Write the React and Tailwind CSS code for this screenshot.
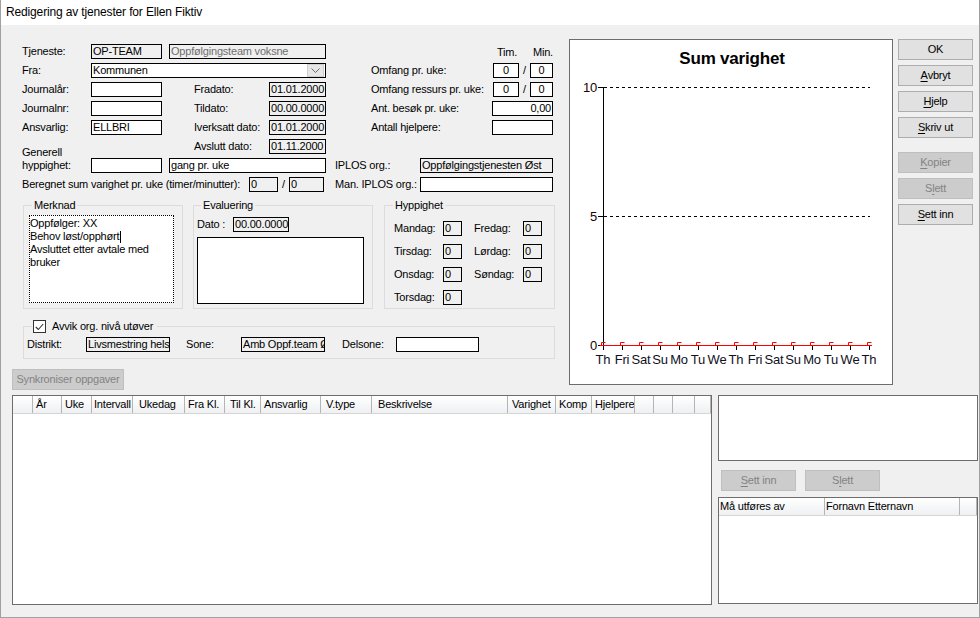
import React from "react";

function Field({ className = "", children }) {
  return (
    <div className={"h-[15px] shrink-0 overflow-hidden whitespace-nowrap border border-black px-[1px] leading-[13px] " + className}>
      {children}
    </div>
  );
}

function Btn({ children, disabled, className = "" }) {
  return (
    <div
      className={
        (disabled
          ? "border-[#bfbfbf] bg-[#cccccc] text-[#838383] "
          : "border-[#adadad] bg-[#e1e1e1] text-black ") +
        "flex h-[21px] shrink-0 items-center justify-center border " +
        className
      }
    >
      {children}
    </div>
  );
}

function U({ children }) {
  return <span className="underline underline-offset-[2px]">{children}</span>;
}

function Row({ left, mid }) {
  return (
    <div className="flex h-[19px] items-center">
      <div className="flex h-[19px] w-[304px] shrink-0 items-center">{left}</div>
      <div className="ml-[9px] flex h-[19px] w-[218px] shrink-0 items-center">{mid}</div>
    </div>
  );
}

function Group({ label, className = "", labelClass = "left-[8px]", children }) {
  return (
    <div className={"relative shrink-0 border border-[#dcdcdc] " + className}>
      <div className={"absolute -top-[7px] bg-[#f0f0f0] px-[2px] " + labelClass}>{label}</div>
      {children}
    </div>
  );
}

function LeftArea() {
  const gray = "bg-[#f0f0f0]";
  return (
    <div className="w-[568px] shrink-0 pt-[17px]">
      <div className="pl-[21px]">
        <Row
          left={
            <>
              <div className="w-[69px] shrink-0">Tjeneste:</div>
              <Field className="w-[71px] bg-[#f0f0f0]">OP-TEAM</Field>
              <Field className="ml-[7px] w-[157px] bg-[#f0f0f0] text-[#6d6d6d]">Oppfølgingsteam voksne</Field>
            </>
          }
          mid={
            <>
              <div className="ml-[162px] w-[36px] shrink-0 pt-[2px]">Tim.</div>
              <div className="pt-[2px]">Min.</div>
            </>
          }
        />
        <Row
          left={
            <>
              <div className="w-[69px] shrink-0">Fra:</div>
              <div className="flex h-[15px] w-[235px] shrink-0 items-center border border-black bg-white pl-[1px]">
                <div className="flex-1">Kommunen</div>
                <div className="mr-[1px] flex h-[13px] w-[17px] items-center justify-center border border-[#cfcfcf] bg-[#e6e6e6]">
                  <svg width="9" height="5" viewBox="0 0 9 5">
                    <path d="M0.5 0.5 L4.5 4.5 L8.5 0.5" fill="none" stroke="#6a6a6a" strokeWidth="1" />
                  </svg>
                </div>
              </div>
            </>
          }
          mid={
            <>
              <div className="ml-[36px] w-[122px] shrink-0">Omfang pr. uke:</div>
              <Field className="w-[26px] bg-white text-center">0</Field>
              <div className="w-[11px] shrink-0 text-center">/</div>
              <Field className="w-[23px] bg-white text-center">0</Field>
            </>
          }
        />
        <Row
          left={
            <>
              <div className="w-[69px] shrink-0">Journalår:</div>
              <Field className="w-[71px] bg-white"></Field>
              <div className="ml-[32px] w-[75px] shrink-0">Fradato:</div>
              <Field className={"w-[57px] " + gray}>01.01.2000</Field>
            </>
          }
          mid={
            <>
              <div className="ml-[36px] w-[122px] shrink-0">Omfang ressurs pr. uke:</div>
              <Field className="w-[26px] bg-white text-center">0</Field>
              <div className="w-[11px] shrink-0 text-center">/</div>
              <Field className="w-[23px] bg-white text-center">0</Field>
            </>
          }
        />
        <Row
          left={
            <>
              <div className="w-[69px] shrink-0">Journalnr:</div>
              <Field className="w-[71px] bg-white"></Field>
              <div className="ml-[32px] w-[75px] shrink-0">Tildato:</div>
              <Field className={"w-[57px] " + gray}>00.00.0000</Field>
            </>
          }
          mid={
            <>
              <div className="ml-[36px] w-[121px] shrink-0">Ant. besøk pr. uke:</div>
              <Field className="w-[61px] bg-white text-right">0,00</Field>
            </>
          }
        />
        <Row
          left={
            <>
              <div className="w-[69px] shrink-0">Ansvarlig:</div>
              <Field className="w-[71px] bg-white">ELLBRI</Field>
              <div className="ml-[32px] w-[75px] shrink-0">Iverksatt dato:</div>
              <Field className={"w-[57px] " + gray}>01.01.2000</Field>
            </>
          }
          mid={
            <>
              <div className="ml-[36px] w-[121px] shrink-0">Antall hjelpere:</div>
              <Field className="w-[61px] bg-white"></Field>
            </>
          }
        />
        <Row
          left={
            <>
              <div className="h-[19px] w-[172px] shrink-0 self-start pt-[9px]">Generell</div>
              <div className="w-[75px] shrink-0">Avslutt dato:</div>
              <Field className={"w-[57px] " + gray}>01.11.2000</Field>
            </>
          }
          mid={null}
        />
        <Row
          left={
            <>
              <div className="w-[69px] shrink-0">hyppighet:</div>
              <Field className="w-[71px] bg-white"></Field>
              <Field className="ml-[7px] w-[157px] bg-white">gang pr. uke</Field>
            </>
          }
          mid={
            <>
              <div className="w-[85px] shrink-0">IPLOS org.:</div>
              <Field className={"w-[133px] " + gray}>Oppfølgingstjenesten Øst</Field>
            </>
          }
        />
        <Row
          left={
            <>
              <div className="w-[227px] shrink-0">Beregnet sum varighet pr. uke (timer/minutter):</div>
              <Field className={"w-[29px] " + gray}>0</Field>
              <div className="w-[11px] shrink-0 text-center">/</div>
              <Field className={"w-[35px] " + gray}>0</Field>
            </>
          }
          mid={
            <>
              <div className="w-[85px] shrink-0">Man. IPLOS org.:</div>
              <Field className="w-[133px] bg-white"></Field>
            </>
          }
        />
      </div>

      <div className="mt-[11px] flex pl-[22px]">
        <Group label="Merknad" className="h-[104px] w-[160px]">
          <div className="ml-[5px] mt-[9px] h-[88px] w-[145px] border border-dotted border-black bg-white pt-[1px]">
            <div>Oppfølger: XX</div>
            <div className="flex items-center">
              Behov løst/opphørt<span className="ml-[1px] inline-block h-[12px] border-l border-black"></span>
            </div>
            <div>Avsluttet etter avtale med</div>
            <div>bruker</div>
          </div>
        </Group>
        <Group label="Evaluering" labelClass="left-[7px]" className="ml-[10px] h-[104px] w-[180px]">
          <div className="pl-[3px] pt-[11px]">
            <div className="flex h-[15px] items-center">
              <div className="w-[36px] shrink-0">Dato :</div>
              <Field className="w-[56px] bg-[#f0f0f0]">00.00.0000</Field>
            </div>
            <div className="mt-[5px] h-[67px] w-[167px] border border-black bg-white"></div>
          </div>
        </Group>
        <Group label="Hyppighet" className="ml-[11px] h-[104px] w-[171px]">
          <div className="flex flex-col gap-[8px] pl-[9px] pt-[15px]">
            {[
              ["Mandag:", "Fredag:"],
              ["Tirsdag:", "Lørdag:"],
              ["Onsdag:", "Søndag:"],
              ["Torsdag:", null],
            ].map(([a, b]) => (
              <div key={a} className="flex h-[15px] items-center">
                <div className="w-[49px] shrink-0">{a}</div>
                <Field className="w-[19px] bg-[#f0f0f0]">0</Field>
                {b && (
                  <>
                    <div className="ml-[12px] w-[49px] shrink-0">{b}</div>
                    <Field className="w-[19px] bg-[#f0f0f0]">0</Field>
                  </>
                )}
              </div>
            ))}
          </div>
        </Group>
      </div>

      <div className="relative ml-[22px] mt-[17px] h-[33px] w-[532px] border border-[#dcdcdc]">
        <div className="absolute -top-[7px] left-[8px] flex h-[13px] items-center bg-[#f0f0f0] pl-[1px] pr-[4px]">
          <div className="flex h-[13px] w-[13px] items-center justify-center border border-[#333333] bg-white">
            <svg width="9" height="8" viewBox="0 0 9 8">
              <path d="M0.8 4 L3.3 6.5 L8.2 1" fill="none" stroke="#333333" strokeWidth="1.1" />
            </svg>
          </div>
          <div className="ml-[6px]">Avvik org. nivå utøver</div>
        </div>
        <div className="mt-[10px] flex h-[15px] items-center pl-[3px]">
          <div className="w-[59px] shrink-0">Distrikt:</div>
          <Field className="w-[84px] bg-[#f0f0f0]">Livsmestring helse</Field>
          <div className="ml-[16px] w-[55px] shrink-0">Sone:</div>
          <Field className="w-[84px] bg-[#f0f0f0]">Amb Oppf.team Øst</Field>
          <div className="ml-[17px] w-[54px] shrink-0">Delsone:</div>
          <Field className="w-[83px] bg-white"></Field>
        </div>
      </div>

      <Btn disabled className="ml-[11px] mt-[10px] w-[112px]">Synkroniser oppgaver</Btn>
    </div>
  );
}

function Chart() {
  const days = ["Th", "Fri", "Sat", "Su", "Mo", "Tu", "We", "Th", "Fri", "Sat", "Su", "Mo", "Tu", "We", "Th"];
  const ff = "Liberation Sans, Arial, sans-serif";
  return (
    <div className="mt-[14px] h-[346px] w-[324px] shrink-0 border border-[#6d6d6d] bg-white">
      <svg width="322" height="344" viewBox="0 0 322 344">
        <text x="162" y="24" textAnchor="middle" fontSize="17" fontWeight="bold" fontFamily={ff} fill="#000">
          Sum varighet
        </text>
        <line x1="34" y1="47.5" x2="300" y2="47.5" stroke="#000" strokeDasharray="3 3" />
        <line x1="34" y1="176.5" x2="300" y2="176.5" stroke="#000" strokeDasharray="3 3" />
        <line x1="33.5" y1="47" x2="33.5" y2="306" stroke="#000" />
        <line x1="28" y1="47.5" x2="34" y2="47.5" stroke="#000" />
        <line x1="28" y1="176.5" x2="34" y2="176.5" stroke="#000" />
        <line x1="28" y1="305.5" x2="34" y2="305.5" stroke="#000" />
        <text x="27" y="52" textAnchor="end" fontSize="13" fontFamily={ff} fill="#200000">10</text>
        <text x="27" y="181" textAnchor="end" fontSize="13" fontFamily={ff} fill="#200000">5</text>
        <text x="27" y="310" textAnchor="end" fontSize="13" fontFamily={ff} fill="#200000">0</text>
        {days.map((d, k) => (
          <line key={"t" + k} x1={33.5 + 19 * k} y1="306" x2={33.5 + 19 * k} y2="310" stroke="#000" />
        ))}
        <line x1="30" y1="305.5" x2="302" y2="305.5" stroke="#ff0000" />
        {days.map((d, k) => (
          <path
            key={"r" + k}
            d={`M${31.5 + 19 * k} 305 V302.5 H${35.5 + 19 * k}`}
            fill="none"
            stroke="#ff0000"
          />
        ))}
        {days.map((d, k) => (
          <text key={"d" + k} x={33 + 19 * k} y="324" textAnchor="middle" fontSize="13" fontFamily={ff} fill="#10101e">
            {d}
          </text>
        ))}
      </svg>
    </div>
  );
}

function Buttons() {
  return (
    <div className="ml-[5px] mt-[14px] flex w-[75px] shrink-0 flex-col gap-[5px]">
      <Btn>OK</Btn>
      <Btn>
        <U>A</U>vbryt
      </Btn>
      <Btn>
        <U>H</U>jelp
      </Btn>
      <Btn>
        <U>S</U>kriv ut
      </Btn>
      <Btn disabled className="mt-[9px]">
        <U>K</U>opier
      </Btn>
      <Btn disabled>
        S<U>l</U>ett
      </Btn>
      <Btn>
        <U>S</U>ett inn
      </Btn>
    </div>
  );
}

function HeadCell({ className = "", children }) {
  return (
    <div className={"h-[17px] shrink-0 overflow-hidden whitespace-nowrap border-r border-[#b5b5b5] bg-gradient-to-b from-white to-[#eef0f2] leading-[16px] " + className}>
      {children}
    </div>
  );
}

function Bottom() {
  const cols = [
    ["", "w-[20px]"],
    ["År", "w-[29px] pl-[3px]"],
    ["Uke", "w-[30px] pl-[3px]"],
    ["Intervall", "w-[41px] pl-[2px]"],
    ["Ukedag", "w-[52px] pl-[6px]"],
    ["Fra Kl.", "w-[40px] pl-[3px]"],
    ["Til Kl.", "w-[36px] pl-[5px]"],
    ["Ansvarlig", "w-[60px] pl-[3px]"],
    ["V.type", "w-[51px] pl-[5px]"],
    ["Beskrivelse", "w-[136px] pl-[6px]"],
    ["Varighet", "w-[48px] pl-[4px]"],
    ["Komp", "w-[36px] pl-[3px]"],
    ["Hjelpere", "w-[43px] pl-[3px]"],
    ["", "w-[19px]"],
    ["", "w-[19px]"],
    ["", "w-[22px]"],
    ["", "w-[16px]"],
  ];
  return (
    <div className="mt-[5px] flex pl-[11px]">
      <div className="h-[210px] w-[700px] shrink-0 border border-[#6d6d6d] bg-white">
        <div className="flex border-b border-[#d5d5d5]">
          {cols.map(([t, c], i) => (
            <HeadCell key={i} className={c}>
              {t}
            </HeadCell>
          ))}
        </div>
      </div>
      <div className="ml-[6px] w-[260px] shrink-0">
        <div className="h-[66px] border border-[#6d6d6d] bg-white"></div>
        <div className="mt-[9px] flex pl-[3px]">
          <Btn disabled className="w-[75px]">
            <U>S</U>ett inn
          </Btn>
          <Btn disabled className="ml-[9px] w-[75px]">
            S<U>l</U>ett
          </Btn>
        </div>
        <div className="mt-[6px] h-[107px] border border-[#6d6d6d] bg-white">
          <div className="flex border-b border-[#d5d5d5]">
            <HeadCell className="w-[106px] pl-[1px]">Må utføres av</HeadCell>
            <HeadCell className="w-[135px] pl-[1px]">Fornavn Etternavn</HeadCell>
            <HeadCell className="w-[17px]"></HeadCell>
          </div>
        </div>
      </div>
    </div>
  );
}

export default function App() {
  return (
    <div className="h-[618px] w-[980px] overflow-hidden whitespace-nowrap border-x border-b border-[#a0a0a0] bg-[#f0f0f0] font-['Liberation_Sans',Arial,sans-serif] text-[11px] leading-[13px] tracking-[-0.2px] text-black">
      <div className="flex h-[25px] items-center bg-white pl-[5px] text-[12px] tracking-[-0.15px]">
        Redigering av tjenester for Ellen Fiktiv
      </div>
      <div className="flex">
        <LeftArea />
        <Chart />
        <Buttons />
      </div>
      <Bottom />
    </div>
  );
}
